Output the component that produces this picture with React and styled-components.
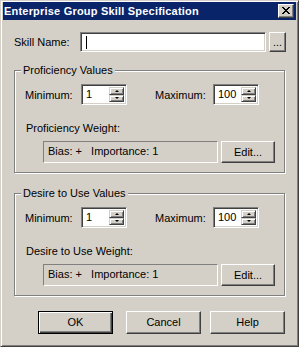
import styled, { createGlobalStyle } from "styled-components";

const GlobalStyle = createGlobalStyle`
  html, body {
    margin: 0;
    padding: 0;
    background: #d4d0c8;
  }
  * {
    box-sizing: border-box;
  }
`;

const Spinner = ({ value }) => {
  return (
    <SpinBox>
      <SpinText>{value}</SpinText>
      <SpinButtons>
        <SpinButton>
          <Arrow up />
        </SpinButton>
        <SpinButton>
          <Arrow />
        </SpinButton>
      </SpinButtons>
    </SpinBox>
  );
};

const ValuesGroup = (props) => {
  return (
    <GroupBox top={props.top}>
      <Legend>{props.title}</Legend>
      <SpinRow>
        <FieldLabel width={56}>Minimum:</FieldLabel>
        <Spinner value="1" />
        <FieldLabel width={58} left={28}>
          Maximum:
        </FieldLabel>
        <Spinner value="100" />
      </SpinRow>
      <WeightLabel>{props.weightLabel}</WeightLabel>
      <WeightRow>
        <StaticBox>Bias: +&nbsp;&nbsp;&nbsp;Importance: 1</StaticBox>
        <Button width={54} height={22}>
          Edit...
        </Button>
      </WeightRow>
    </GroupBox>
  );
};

export default function App() {
  return (
    <>
      <GlobalStyle />
      <Window>
        <TitleBar>
          <TitleText>Enterprise Group Skill Specification</TitleText>
          <CloseButton>
            <svg width="8" height="7" viewBox="0 0 8 7">
              <path
                d="M0 0h2v1h1v1h2V1h1V0h2v1H7v1H6v1H5v1h1v1h1v1h1v1H6V6H5V5H3v1H2v1H0V6h1V5h1V4h1V3H2V2H1V1H0z"
                fill="#000"
              />
            </svg>
          </CloseButton>
        </TitleBar>
        <Body>
          <SkillRow>
            <FieldLabel width={66}>Skill Name:</FieldLabel>
            <TextInput>
              <Caret />
            </TextInput>
            <Button width={17} height={20}>
              ...
            </Button>
          </SkillRow>
          <ValuesGroup
            top={18}
            title="Proficiency Values"
            weightLabel="Proficiency Weight:"
          />
          <ValuesGroup
            top={20}
            title="Desire to Use Values"
            weightLabel="Desire to Use Weight:"
          />
          <ButtonRow>
            <DefaultButton>OK</DefaultButton>
            <Button width={75} height={23} left={13}>
              Cancel
            </Button>
            <Button width={75} height={23} left={9}>
              Help
            </Button>
          </ButtonRow>
        </Body>
      </Window>
    </>
  );
}

const Window = styled.div`
  width: 299px;
  height: 347px;
  background: #d4d0c8;
  border-top: 1px solid #d4d0c8;
  border-left: 1px solid #d4d0c8;
  border-right: 1px solid #404040;
  border-bottom: 1px solid #404040;
  box-shadow: inset 1px 1px #ffffff, inset -1px -1px #808080;
  padding: 1px 2px 2px 2px;
  display: flex;
  flex-direction: column;
  font-family: "Liberation Sans", Arial, sans-serif;
  font-size: 11px;
  color: #000;
`;

const TitleBar = styled.div`
  height: 18px;
  background: #0a246a;
  display: flex;
  align-items: center;
  justify-content: space-between;
  padding: 0 2px 0 1px;
`;

const TitleText = styled.span`
  color: #ffffff;
  font-weight: bold;
  font-size: 11px;
  letter-spacing: 0.2px;
`;

const CloseButton = styled.div`
  width: 16px;
  height: 14px;
  background: #d4d0c8;
  border-top: 1px solid #ffffff;
  border-left: 1px solid #ffffff;
  border-right: 1px solid #404040;
  border-bottom: 1px solid #404040;
  box-shadow: inset -1px -1px #808080;
  display: flex;
  align-items: center;
  justify-content: center;
  padding: 0 1px 1px 0;
`;

const Body = styled.div`
  display: flex;
  flex-direction: column;
  padding: 12px 0 0 11px;
`;

const SkillRow = styled.div`
  display: flex;
  align-items: center;
  height: 20px;
`;

const FieldLabel = styled.span`
  width: ${(p) => p.width}px;
  margin-left: ${(p) => p.left || 0}px;
  flex-shrink: 0;
  white-space: nowrap;
`;

const TextInput = styled.div`
  width: 186px;
  height: 20px;
  background: #ffffff;
  border-top: 1px solid #808080;
  border-left: 1px solid #808080;
  border-right: 1px solid #ffffff;
  border-bottom: 1px solid #ffffff;
  box-shadow: inset 1px 1px #404040, inset -1px -1px #d4d0c8;
  display: flex;
  align-items: center;
  padding-left: 5px;
  margin-right: 3px;
`;

const Caret = styled.div`
  width: 1px;
  height: 13px;
  background: #000;
`;

const Button = styled.div`
  width: ${(p) => p.width}px;
  height: ${(p) => p.height}px;
  margin-left: ${(p) => p.left || 0}px;
  flex-shrink: 0;
  background: #d4d0c8;
  border-top: 1px solid #ffffff;
  border-left: 1px solid #ffffff;
  border-right: 1px solid #404040;
  border-bottom: 1px solid #404040;
  box-shadow: inset -1px -1px #808080;
  display: flex;
  align-items: center;
  justify-content: center;
  padding-bottom: 1px;
`;

const DefaultButton = styled.div`
  width: 75px;
  height: 23px;
  background: #d4d0c8;
  border: 1px solid #000;
  box-shadow: inset 1px 1px #ffffff, inset -1px -1px #404040,
    inset -2px -2px #808080;
  display: flex;
  align-items: center;
  justify-content: center;
  padding-bottom: 1px;
`;

const GroupBox = styled.div`
  position: relative;
  width: 271px;
  margin-top: ${(p) => p.top}px;
  border: 1px solid #808080;
  box-shadow: inset 1px 1px #ffffff, 1px 1px #ffffff;
  padding: 13px 0 9px 10px;
  display: flex;
  flex-direction: column;
`;

const Legend = styled.span`
  position: absolute;
  top: -7px;
  left: 6px;
  padding: 0 2px;
  background: #d4d0c8;
  line-height: 13px;
`;

const SpinRow = styled.div`
  display: flex;
  align-items: center;
  height: 21px;
`;

const SpinBox = styled.div`
  width: 46px;
  height: 21px;
  flex-shrink: 0;
  background: #ffffff;
  border-top: 1px solid #808080;
  border-left: 1px solid #808080;
  border-right: 1px solid #ffffff;
  border-bottom: 1px solid #ffffff;
  box-shadow: inset 1px 1px #404040, inset -1px -1px #d4d0c8;
  display: flex;
  padding: 2px 2px 2px 2px;
`;

const SpinText = styled.span`
  flex: 1;
  padding-left: 2px;
  line-height: 15px;
`;

const SpinButtons = styled.div`
  width: 15px;
  display: flex;
  flex-direction: column;
`;

const SpinButton = styled.div`
  flex: 1;
  background: #d4d0c8;
  border-top: 1px solid #d4d0c8;
  border-left: 1px solid #d4d0c8;
  border-right: 1px solid #404040;
  border-bottom: 1px solid #404040;
  box-shadow: inset 1px 1px #ffffff, inset -1px -1px #808080;
  display: flex;
  align-items: center;
  justify-content: center;
`;

const Arrow = styled.div`
  width: 0;
  height: 0;
  border-left: 2px solid transparent;
  border-right: 2px solid transparent;
  ${(p) =>
    p.up ? "border-bottom: 2px solid #000;" : "border-top: 2px solid #000;"}
`;

const WeightLabel = styled.div`
  margin: 17px 0 0 1px;
  line-height: 13px;
`;

const WeightRow = styled.div`
  display: flex;
  margin: 6px 0 0 18px;
`;

const StaticBox = styled.div`
  width: 175px;
  height: 22px;
  margin-right: 3px;
  border-top: 1px solid #808080;
  border-left: 1px solid #808080;
  border-right: 1px solid #ffffff;
  border-bottom: 1px solid #ffffff;
  padding: 3px 0 0 4px;
  white-space: nowrap;
`;

const ButtonRow = styled.div`
  display: flex;
  margin-top: 15px;
  padding-left: 24px;
`;
